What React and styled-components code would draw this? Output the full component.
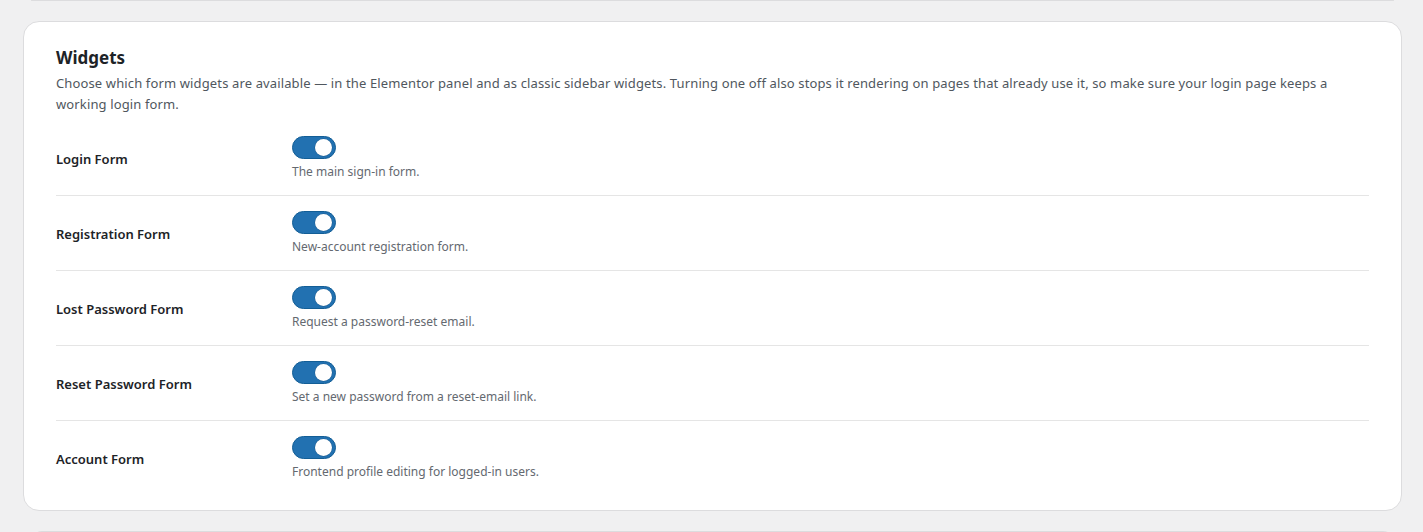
import React, { useState } from "react";
import styled, { createGlobalStyle } from "styled-components";

const GlobalStyle = createGlobalStyle`
  html, body {
    margin: 0;
    padding: 0;
    background: #f0f0f1;
  }
  body {
    font-family: "Noto Sans", "Open Sans", Arial, sans-serif;
    color: #1d2327;
  }
`;

const Page = styled.div`
  padding: 0 21px 0 23px;
  height: 532px;
  overflow: hidden;
  display: flex;
  flex-direction: column;
  gap: 20px;
`;

const EdgeCard = styled.div`
  margin: 0 8px;
  height: ${p => p.$h}px;
  flex: none;
  background: #fff;
  border: 1px solid #dcdcde;
  border-${p => (p.$top ? "top" : "bottom")}: none;
  border-radius: ${p => (p.$top ? "0 0 16px 16px" : "16px 16px 0 0")};
`;

const Card = styled.section`
  flex: none;
  background: #fff;
  border: 1px solid #dcdcde;
  border-radius: 16px;
  padding: 25px 32px 15px;
`;

const Title = styled.h2`
  margin: 0 0 4px;
  font-size: 17px;
  line-height: 22px;
  font-weight: 700;
  color: #1d2327;
`;

const Intro = styled.p`
  margin: 0 0 6px;
  font-size: 13px;
  line-height: 21px;
  letter-spacing: 0.13px;
  color: #50575e;
`;

const List = styled.div`
  display: flex;
  flex-direction: column;
`;

const Row = styled.div`
  display: grid;
  grid-template-columns: 236px 1fr;
  align-items: center;
  padding: 15px 0 14px;
  border-bottom: ${p => (p.$last ? "none" : "1px solid #e5e5e5")};
`;

const Label = styled.div`
  font-size: 13px;
  font-weight: 600;
  color: #1d2327;
`;

const Field = styled.div`
  display: flex;
  flex-direction: column;
  align-items: flex-start;
  gap: 4px;
`;

const Track = styled.button`
  position: relative;
  width: 44px;
  height: 23px;
  padding: 0;
  border: 1px solid ${p => (p.$on ? "#135e96" : "#8c8f94")};
  border-radius: 12px;
  background: ${p => (p.$on ? "#2271b1" : "#dcdcde")};
  cursor: pointer;
`;

const Knob = styled.span`
  position: absolute;
  top: 2px;
  left: ${p => (p.$on ? "22px" : "3px")};
  width: 17px;
  height: 17px;
  border-radius: 50%;
  background: #fff;
  box-shadow: 0 0 0 0.5px rgba(0, 0, 0, 0.2);
`;

const Hint = styled.div`
  font-size: 12px;
  line-height: 18px;
  color: #646970;
`;

const widgets = [
  { name: "Login Form", hint: "The main sign-in form." },
  { name: "Registration Form", hint: "New-account registration form." },
  { name: "Lost Password Form", hint: "Request a password-reset email." },
  { name: "Reset Password Form", hint: "Set a new password from a reset-email link." },
  { name: "Account Form", hint: "Frontend profile editing for logged-in users." },
];

function Toggle({ on, onClick }) {
  return (
    <Track $on={on} onClick={onClick} aria-pressed={on}>
      <Knob $on={on} />
    </Track>
  );
}

export default function App() {
  const [state, setState] = useState(widgets.map(() => true));

  const flip = i => {
    setState(s => s.map((v, j) => (j === i ? !v : v)));
  };

  return (
    <>
      <GlobalStyle />
      <Page>
        <EdgeCard $top $h={0} />
        <Card>
          <Title>Widgets</Title>
          <Intro>
            Choose which form widgets are available — in the Elementor panel and as classic sidebar
            widgets. Turning one off also stops it rendering on pages that already use it, so make
            sure your login page keeps a working login form.
          </Intro>
          <List>
            {widgets.map((w, i) => (
              <Row key={w.name} $last={i === widgets.length - 1}>
                <Label>{w.name}</Label>
                <Field>
                  <Toggle on={state[i]} onClick={() => flip(i)} />
                  <Hint>{w.hint}</Hint>
                </Field>
              </Row>
            ))}
          </List>
        </Card>
        <EdgeCard $h={10} />
      </Page>
    </>
  );
}
